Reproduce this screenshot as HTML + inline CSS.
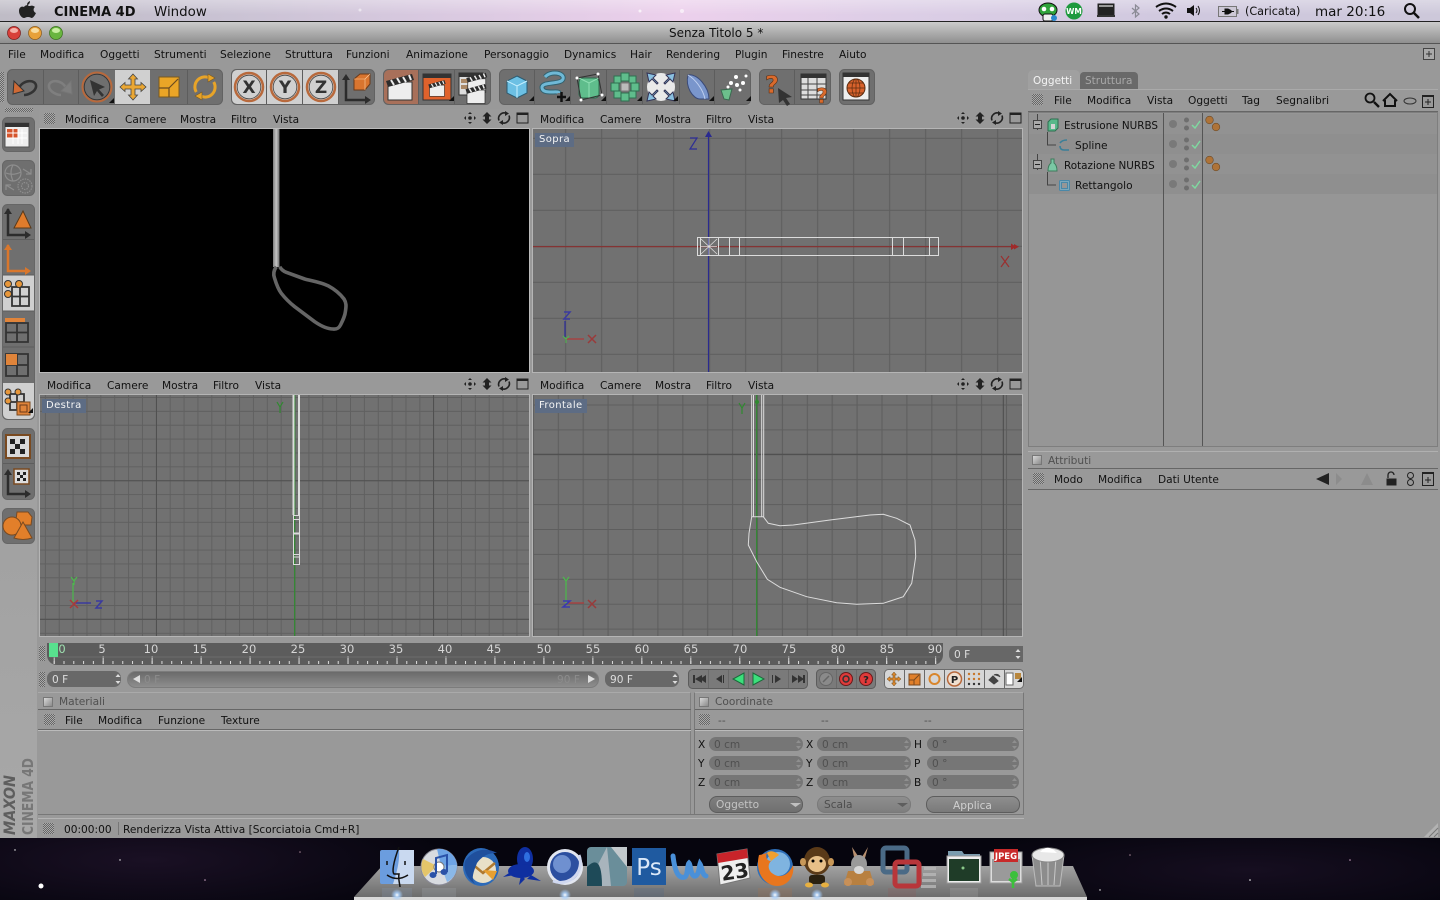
<!DOCTYPE html>
<html><head><meta charset="utf-8"><title>CINEMA 4D</title>
<style>
html,body{margin:0;padding:0;width:1440px;height:900px;overflow:hidden;background:#05040c}
div{position:absolute;box-sizing:border-box}
.t{position:absolute;margin-top:1px;white-space:nowrap;font:10.6px/14px "DejaVu Sans","Liberation Sans",sans-serif;color:#111}
.grip{width:11px;height:11px;background:repeating-conic-gradient(#666 0 25%,#aaa 0 50%) 0 0/2px 2px}
.f{background:#767676;border-radius:7px}
.g{color:#505050}
.chk{width:10px;height:10px;background:linear-gradient(135deg,#d8d8d8,#8a8a8a);border:1px solid #777}
svg{position:absolute;left:0;top:0}
text{font-family:"DejaVu Sans","Liberation Sans",sans-serif}
</style></head><body>

<div style="left:0;top:838px;width:1440px;height:62px;background:radial-gradient(ellipse 300px 60px at 150px 22px,#1a1024,rgba(6,5,14,0) 100%),radial-gradient(ellipse 300px 50px at 1250px 32px,#160e20,rgba(6,5,14,0) 100%),#06050e"></div>

<div style="left:0;top:0;width:1440px;height:22px;background:linear-gradient(180deg,rgba(255,255,255,.3),rgba(255,255,255,0) 70%),linear-gradient(90deg,#bfbcc6 0,#c8c2d2 200px,#d6c8de 400px,#ecd0ec 680px,#dccee6 900px,#cfc8de 1200px,#cdc8da 1440px);border-bottom:1px solid #222"></div>
<div style="left:0;top:22px;width:1440px;height:22px;background:linear-gradient(180deg,#cbcbcb,#8f8f8f);border-bottom:1px solid #555"></div>
<div style="left:0;top:44px;width:1440px;height:794px;background:#999"></div>
<div style="left:0;top:106px;width:37px;height:732px;background:linear-gradient(180deg,#999,#a8a8a8)"></div>

<!-- viewports -->
<div style="left:39px;top:109px;width:491px;height:20px;background:#9a9a9a"></div>
<div style="left:39px;top:128px;width:491px;height:245px;background:#000;border:1px solid #bbb"></div>
<div style="left:532px;top:128px;width:491px;height:245px;background:#717171;border:1px solid #b5b5b5"></div>
<div style="left:39px;top:394px;width:491px;height:243px;background:#717171;border:1px solid #b5b5b5"></div>
<div style="left:532px;top:394px;width:491px;height:243px;background:#717171;border:1px solid #b5b5b5"></div>

<!-- timeline -->
<div style="left:47px;top:643px;width:896px;height:22px;background:#5c5c5c;border-radius:0 0 10px 10px"></div>
<div class="f" style="left:949px;top:646px;width:74px;height:16px;background:#676767;border-radius:7px 0 0 7px"></div>
<div class="f" style="left:47px;top:671px;width:74px;height:16px;background:#686868"></div>
<div style="left:127px;top:671px;width:472px;height:17px;border-radius:9px;background:linear-gradient(180deg,#6a6a6a,#8e8e8e);border:1px solid #7c7c7c"></div>
<div class="f" style="left:605px;top:671px;width:74px;height:16px;background:#686868"></div>

<!-- materials / coordinates -->
<div style="left:38px;top:692px;width:653px;height:123px;background:#999;border:1px solid #808080;border-top-color:#aaa;border-left:0"></div>
<div style="left:38px;top:709px;width:653px;height:1px;background:#666"></div>
<div style="left:38px;top:729px;width:653px;height:2px;background:#666;border-bottom:1px solid #bbb"></div>
<div style="left:694px;top:692px;width:330px;height:123px;background:#999;border:1px solid #777;border-top-color:#aaa"></div>
<div style="left:695px;top:709px;width:328px;height:1px;background:#666"></div>
<div style="left:695px;top:729px;width:328px;height:2px;background:#666;border-bottom:1px solid #bbb"></div>
<div class="chk" style="left:43px;top:697px"></div><div class="chk" style="left:699px;top:697px"></div>

<div class="f" style="left:709px;top:737px;width:94px;height:14px"></div>
<div class="f" style="left:817px;top:737px;width:94px;height:14px"></div>
<div class="f" style="left:927px;top:737px;width:92px;height:14px"></div>
<div class="f" style="left:709px;top:756px;width:94px;height:14px"></div>
<div class="f" style="left:817px;top:756px;width:94px;height:14px"></div>
<div class="f" style="left:927px;top:756px;width:92px;height:14px"></div>
<div class="f" style="left:709px;top:775px;width:94px;height:14px"></div>
<div class="f" style="left:817px;top:775px;width:94px;height:14px"></div>
<div class="f" style="left:927px;top:775px;width:92px;height:14px"></div>
<div style="left:709px;top:796px;width:94px;height:17px;border-radius:8px;background:linear-gradient(#7e7e7e,#707070);border:1px solid #5d5d5d"></div>
<div style="left:817px;top:796px;width:94px;height:17px;border-radius:8px;background:linear-gradient(#8e8e8e,#7e7e7e);border:1px solid #7a7a7a"></div>
<div style="left:926px;top:796px;width:94px;height:17px;border-radius:8px;background:linear-gradient(#8e8e8e,#7a7a7a);border:1px solid #5d5d5d"></div>

<!-- status -->
<div style="left:38px;top:814px;width:986px;height:1px;background:#777"></div>
<div style="left:38px;top:818px;width:986px;height:1px;background:#b4b4b4"></div>
<div style="left:118px;top:822px;width:1px;height:13px;background:#777"></div>

<!-- right panels -->
<div style="left:1028px;top:70px;width:52px;height:20px;background:#a0a0a0;border-radius:5px 5px 0 0"></div>
<div style="left:1080px;top:72px;width:58px;height:18px;background:#696969;border-radius:4px 4px 0 0"></div>
<div style="left:1028px;top:89px;width:410px;height:23px;background:#999;border-top:1px solid #aaa;border-bottom:1px solid #666"></div>
<div style="left:1028px;top:112px;width:410px;height:335px;background:#969696;border:1px solid #7e7e7e"></div>
<div style="left:1029px;top:114px;width:408px;height:20px;background:#929292"></div>
<div style="left:1029px;top:134px;width:408px;height:20px;background:#8f8f8f"></div>
<div style="left:1029px;top:154px;width:408px;height:20px;background:#929292"></div>
<div style="left:1029px;top:174px;width:408px;height:20px;background:#8f8f8f"></div>
<div style="left:1163px;top:113px;width:1px;height:333px;background:#555"></div>
<div style="left:1202px;top:113px;width:1px;height:333px;background:#555"></div>
<div style="left:1028px;top:451px;width:410px;height:18px;background:#999;border-top:1px solid #b0b0b0;border-bottom:1px solid #666"></div>
<div style="left:1028px;top:469px;width:410px;height:21px;background:#999;border-bottom:1px solid #666"></div>
<div class="chk" style="left:1032px;top:455px"></div>

<!-- grips -->
<div class="grip" style="left:44px;top:113px"></div>
<div class="grip" style="left:1032px;top:94px"></div>
<div class="grip" style="left:1033px;top:473px"></div>
<div class="grip" style="left:44px;top:714px"></div>
<div class="grip" style="left:699px;top:714px"></div>
<div class="grip" style="left:43px;top:823px"></div>
<div class="grip" style="left:39px;top:646px;width:6px;height:15px"></div>
<div class="grip" style="left:39px;top:672px;width:6px;height:15px"></div>
<div class="grip" style="left:0;top:72px;width:4px;height:30px"></div>
<div class="grip" style="left:5px;top:108px;width:28px;height:4px"></div>

<svg width="1440" height="900" viewBox="0 0 1440 900">
<defs>
<pattern id="gTR" patternUnits="userSpaceOnUse" x="528.7" y="137.3" width="36" height="36"><path d="M1 0V36M0 1H36" stroke="#5e5e5e" stroke-width="1.100" fill="none"/></pattern>
<pattern id="gBR" patternUnits="userSpaceOnUse" x="532.4" y="404" width="24.9" height="24.9"><path d="M1 0V24.9M0 1H24.9" stroke="#5e5e5e" stroke-width="1.100" fill="none"/></pattern>
<pattern id="gBL" patternUnits="userSpaceOnUse" x="30.5" y="396.5" width="13.87" height="13.87"><path d="M1 0V13.87M0 1H13.87" stroke="#606060" stroke-width="1" fill="none"/></pattern>
<pattern id="tS" patternUnits="userSpaceOnUse" x="53.7" y="0" width="9.794" height="900"><path d="M.5 661V664" stroke="#ddd" stroke-width="1"/></pattern>
<pattern id="tL" patternUnits="userSpaceOnUse" x="53.7" y="0" width="48.97" height="900"><path d="M.5 656V664" stroke="#ddd" stroke-width="1"/></pattern>
<linearGradient id="shaft" x1="0" x2="1" y1="0" y2="0"><stop offset="0" stop-color="#7e7e7e"/><stop offset=".5" stop-color="#c4c4c4"/><stop offset="1" stop-color="#707070"/></linearGradient>
<linearGradient id="dock" x1="0" x2="0" y1="0" y2="1"><stop offset="0" stop-color="#a2a2a2"/><stop offset="1" stop-color="#6c6c6c"/></linearGradient>
<radialGradient id="glow"><stop offset="0" stop-color="#fff"/><stop offset=".4" stop-color="#a8d0ff" stop-opacity=".8"/><stop offset="1" stop-color="#a8d0ff" stop-opacity="0"/></radialGradient>
<g id="clap"><rect x="-12" y="-6" width="24" height="18" fill="#eee" stroke="#333"/><path d="M-14-7L12-14L14-8L-12-1Z" fill="#2c2c2c"/><path d="M-9-8L-6-3M-3-10L0-5M3-11L6-6M9-13L11-8" stroke="#eee" stroke-width="2"/></g>
<g id="tri"><path d="M0 0H5V-5Z" fill="#111"/></g>
</defs>

<!-- menubar icons -->
<path d="M28 5C25 5 24 7 24 7C22 6 19 7 19 11C19 15 22 18 24 18C25 18 26 17 28 17C30 17 31 18 32 18C34 17 35 15 36 13C33 12 33 8 35 7C34 6 32 5 30 6C29 6 28 6 28 5M27 5C27 3 28 2 30 1C30 3 29 5 27 5" fill="#222"/>
<g transform="translate(1048,12)"><ellipse rx="9" ry="7" cy="-2" fill="#2fa33a" stroke="#111"/><circle cx="-4" cy="-3" r="2.3" fill="#fff"/><circle cx="4" cy="-3" r="2.3" fill="#fff"/><rect x="-5" y="2" width="10" height="7" rx="2" fill="#eee" stroke="#111"/><circle cx="6" cy="6" r="3" fill="#2a88cc"/></g>
<circle cx="1074" cy="11" r="8.500" fill="#1e9a3e"/><text x="1074" y="14" font-size="7.500" font-weight="bold" fill="#fff" text-anchor="middle">WM</text>
<rect x="1098" y="4" width="16" height="11" fill="#222" stroke="#222"/><rect x="1099" y="5" width="14" height="2" fill="#999"/><path d="M1097 16H1115" stroke="#333" stroke-width="2"/>
<path d="M1132 8L1139 14L1135.500 17V5L1139 8L1132 14" fill="none" stroke="#8a8a94" stroke-width="1.200"/>
<g fill="none" stroke="#111" stroke-width="2"><path d="M1156 7Q1166 0 1176 7"/><path d="M1159 11Q1166 6 1173 11"/><path d="M1162 14Q1166 11 1170 14"/></g><circle cx="1166" cy="17" r="1.700" fill="#111"/>
<path d="M1187 8H1190L1194 5V16L1190 13H1187Z" fill="#111"/><path d="M1196 8Q1198 10.500 1196 13M1198 6Q1201 10.500 1198 15" fill="none" stroke="#111"/>
<rect x="1218.500" y="6.500" width="18" height="10" fill="#cdc8d6" stroke="#777"/><path d="M1237.500 9V14" stroke="#777" stroke-width="2"/><path d="M1222 11.500H1225M1225 9V14H1228L1231 12.500V10.500L1228 9ZM1231 11.500H1234" fill="#111" stroke="#111"/>
<circle cx="1410" cy="9" r="5" fill="none" stroke="#111" stroke-width="2"/><path d="M1414 13L1419 18" stroke="#111" stroke-width="2.500"/>

<!-- traffic lights -->
<circle cx="14" cy="33" r="6.500" fill="#d8403a" stroke="#7a1c1c" stroke-width=".7"/><ellipse cx="14" cy="30.500" rx="4" ry="2.500" fill="#f4b0a8"/>
<circle cx="35" cy="33" r="6.500" fill="#e8a13a" stroke="#8a5a1a" stroke-width=".7"/><ellipse cx="35" cy="30.500" rx="4" ry="2.500" fill="#f8dca0"/>
<circle cx="56" cy="33" r="6.500" fill="#69b53f" stroke="#39701c" stroke-width=".7"/><ellipse cx="56" cy="30.500" rx="4" ry="2.500" fill="#c8eea0"/>

<rect x="1423.500" y="48.500" width="11" height="11" fill="#aaa" stroke="#444"/><path d="M1426 54H1432M1429 51V57" stroke="#333"/>

<!-- top toolbar groups -->
<g stroke="#626262" fill="#6f6f6f">
<rect x="7.500" y="69.500" width="215" height="35" rx="5"/>
<rect x="231.500" y="69.500" width="143" height="35" rx="5"/>
<rect x="383.500" y="69.500" width="107" height="35" rx="5"/>
<rect x="499.500" y="69.500" width="251" height="35" rx="5"/>
<rect x="759.500" y="69.500" width="71" height="35" rx="5"/>
<rect x="839.500" y="69.500" width="35" height="35" rx="5"/>
</g>
<rect x="115" y="70" width="35" height="34" fill="#d0d0d0"/>
<path d="M232 75a5 5 0 0 1 5-5H338V104H237a5 5 0 0 1-5-5Z" fill="#d0d0d0"/>
<path d="M384 75a5 5 0 0 1 5-5H418V104H389a5 5 0 0 1-5-5Z" fill="#a8705a"/>
<g stroke="#5d5d5d"><path d="M43.500 70V104M78.500 70V104M187.500 70V104M266.500 70V104M302.500 70V104M338.500 70V104M418.500 70V104M454.500 70V104M534.500 70V104M570.500 70V104M606.500 70V104M642.500 70V104M679.500 70V104M714.500 70V104M794.500 70V104"/></g>

<!-- undo -->
<g transform="translate(25,87)"><path d="M-6 1C-2-8 12-8 11 0C10 5 3 8-1 8" fill="none" stroke="#333" stroke-width="2.600"/><path d="M-11-6L-12 7L-1 4Z" fill="#cf6a35" stroke="#333"/></g>
<g transform="translate(60,87)" opacity=".6"><path d="M6 1C2-8-12-8-11 0C-10 5-3 8 1 8" fill="none" stroke="#8a8a8a" stroke-width="2.600"/><path d="M11-6L12 7L1 4Z" fill="#888" stroke="#7c7c7c"/></g>
<g transform="translate(97,87)"><circle r="14.500" fill="none" stroke="#b8693c" stroke-width="2"/><circle r="12.800" fill="none" stroke="#333" stroke-width=".9"/><path d="M-7-7L8 0L2 2.500L7 8L5 10L0 4L-3 9Z" fill="#333"/></g>
<use href="#tri" x="109" y="103"/>
<g transform="translate(133,87)"><path d="M0-13L4.500-8H2V-2H8V-4.500L13 0L8 4.500V2H2V8H4.500L0 13L-4.500 8H-2V2H-8V4.500L-13 0L-8-4.500V-2H-2V-8H-4.500Z" fill="#eba733" stroke="#444" stroke-width=".8"/></g>
<g transform="translate(169,87)"><rect x="-10" y="-10" width="20" height="20" fill="#eaa527" stroke="#7a5a20"/><path d="M-10 1H0V10M0 1L9-8" fill="none" stroke="#6a4a20" stroke-width="1.200"/></g>
<g transform="translate(205,87)"><g fill="none" stroke="#e8a428" stroke-width="3"><path d="M5-8.700A10 10 0 0 0-8.700 5"/><path d="M-5 8.700A10 10 0 0 0 8.700-5"/></g><path d="M3-13L10-9L3-5ZM-3 13L-10 9L-3 5Z" fill="#e8a428" stroke="#7a5a20" stroke-width=".6"/></g>
<g font-size="17" font-weight="bold" fill="#333" text-anchor="middle">
<g fill="none"><circle cx="249" cy="87" r="14" stroke="#b8693c" stroke-width="2.500"/><circle cx="285" cy="87" r="14" stroke="#b8693c" stroke-width="2.500"/><circle cx="321" cy="87" r="14" stroke="#b8693c" stroke-width="2.500"/><circle cx="249" cy="87" r="11.800" stroke="#444" stroke-width=".8"/><circle cx="285" cy="87" r="11.800" stroke="#444" stroke-width=".8"/><circle cx="321" cy="87" r="11.800" stroke="#444" stroke-width=".8"/></g>
<text x="249" y="93">X</text><text x="285" y="93">Y</text><text x="321" y="93">Z</text></g>
<g transform="translate(357,87)"><path d="M-11-11V13H10" fill="none" stroke="#2c2c2c" stroke-width="2.500"/><path d="M-15-7L-11-13L-7-7ZM8 9L14 13L8 17Z" fill="#2c2c2c"/><path d="M-3-8L3-13H13V-3L8 3H-3Z" fill="#d9752f" stroke="#6a3a1a"/><path d="M-3-8H8V3M8-8L13-13" stroke="#ffd0a0" fill="none" stroke-width=".6"/></g>
<use href="#clap" x="400" y="88"/>
<g transform="translate(437,87)"><rect x="-14" y="-13" width="28" height="26" fill="#e0622c" stroke="#333"/><rect x="-14" y="-13" width="28" height="4" fill="#333"/><use href="#clap" transform="scale(.62)" y="3"/></g><use href="#tri" x="449" y="101"/>
<g transform="translate(473,87)"><rect x="-14" y="-14" width="24" height="22" fill="#ddd" stroke="#333"/><rect x="-14" y="-14" width="24" height="4" fill="#333"/><rect x="-12" y="-8" width="7" height="4" fill="#a86"/><rect x="-12" y="-2" width="7" height="4" fill="#a86"/><use href="#clap" transform="scale(.75)" x="5" y="-5"/><use href="#clap" transform="scale(.75)" x="4" y="10"/></g>
<g transform="translate(517,87)"><path d="M0-11L10-6V6L0 11L-10 6V-6Z" fill="#6cc0e4" stroke="#2a5a70"/><path d="M-10-6L0-1L10-6M0-1V11" fill="none" stroke="#c8f0ff"/></g><use href="#tri" x="529" y="101"/>
<g transform="translate(553,85)" fill="none"><path d="M-8-8C-2-15 12-12 10-6C8 0-12-4-11 3C-10 10 6 5 6 8" stroke="#33626f" stroke-width="5"/><path d="M-8-8C-2-15 12-12 10-6C8 0-12-4-11 3C-10 10 6 5 6 8" stroke="#6fb9d6" stroke-width="3"/><path d="M4 12H13M8.500 7V17" stroke="#111" stroke-width="2.500"/></g><use href="#tri" x="565" y="101"/>
<g transform="translate(589,87)"><rect x="-10" y="-9" width="20" height="20" rx="4" fill="#5fbd8c" stroke="#2c6a4c"/><path d="M-10-9L0-4L10-9M0-4V11" stroke="#8fe0b4" fill="none"/><path d="M-12-9L9-13L13 8L-8 13Z" fill="none" stroke="#333"/><g fill="#fff"><circle cx="-12" cy="-9" r="1.500"/><circle cx="9" cy="-13" r="1.500"/><circle cx="13" cy="8" r="1.500"/><circle cx="-8" cy="13" r="1.500"/></g></g><use href="#tri" x="601" y="101"/>
<g transform="translate(625,87)" fill="#5fbd8c" stroke="#2f6f50"><rect x="-4" y="-14" width="8" height="8"/><rect x="-4" y="6" width="8" height="8"/><rect x="-14" y="-4" width="8" height="8"/><rect x="6" y="-4" width="8" height="8"/><rect x="-11" y="-11" width="7" height="7"/><rect x="4" y="-11" width="7" height="7"/><rect x="-11" y="4" width="7" height="7"/><rect x="4" y="4" width="7" height="7"/><rect x="-4" y="-4" width="8" height="8" fill="#bbb" stroke="#777"/></g><use href="#tri" x="637" y="101"/>
<g transform="translate(661,87)"><circle r="14" fill="#fff" opacity=".85"/><g fill="#8ac0e0" stroke="#335"><path d="M-14-14L-5-12L-8-9L-3-4L-4-3L-9-8L-12-5Z"/><path d="M14-14L5-12L8-9L3-4L4-3L9-8L12-5Z"/><path d="M-14 14L-5 12L-8 9L-3 4L-4 3L-9 8L-12 5Z"/><path d="M14 14L5 12L8 9L3 4L4 3L9 8L12 5Z"/></g></g><use href="#tri" x="673" y="101"/>
<g transform="translate(697,87)"><path d="M-9-12C0-14 12 0 12 12L3 12C-4 12-12 0-9-12Z" fill="#7a96cc" stroke="#3a4a78"/><path d="M-9-12C-2-8 6 2 8 12" stroke="#c0d0f0" fill="none"/></g><use href="#tri" x="709" y="101"/>
<g transform="translate(734,87)"><path d="M-13 3L-2 2L-5 13L-10 12Z" fill="#6cc08c" stroke="#3a6a50"/><g fill="#fff"><circle cx="2" cy="-10" r="2"/><circle cx="9" cy="-4" r="2"/><circle cx="-3" cy="-4" r="2"/><circle cx="3" cy="-2" r="2"/><circle cx="12" cy="-11" r="1.500"/><circle cx="-6" cy="0" r="1.500"/><circle cx="6" cy="3" r="1.500"/></g></g><use href="#tri" x="746" y="101"/>
<text x="772" y="93" font-size="24" font-weight="bold" fill="#d96a2c" stroke="#5a2c10" stroke-width=".6" text-anchor="middle">?</text>
<path d="M778 88L792 97L786 98L790 104L787 106L783 100L779 103Z" fill="#333"/>
<g transform="translate(814,87)"><rect x="-13" y="-13" width="25" height="25" fill="#ddd" stroke="#333"/><rect x="-13" y="-13" width="25" height="4" fill="#333"/><path d="M-13-3H12M-13 3H12M-13 8H12M-6-9V12M3-9V12" stroke="#444"/></g>
<text x="822" y="103" font-size="20" font-weight="bold" fill="#d96a2c" stroke="#5a2c10" stroke-width=".5" text-anchor="middle">?</text>
<g transform="translate(856,87)"><rect x="-13" y="-14" width="26" height="27" fill="#eee" stroke="#333"/><rect x="-13" y="-14" width="26" height="4" fill="#333"/><circle cy="1" r="9" fill="#d9622c" stroke="#5a2c10"/><path d="M-9 1H9M0-8V10M-7-4H7M-7 6H7" stroke="#5a2c10" stroke-width=".7"/><ellipse cy="1" rx="4" ry="9" fill="none" stroke="#5a2c10" stroke-width=".7"/></g>

<!-- left toolbar -->
<g stroke="#666" fill="#6f6f6f">
<rect x="2.500" y="117.500" width="32" height="34" rx="5"/>
<rect x="2.500" y="160.500" width="32" height="35" rx="5"/>
<rect x="2.500" y="204.500" width="32" height="215" rx="5"/>
<rect x="2.500" y="428.500" width="32" height="71" rx="5"/>
<rect x="2.500" y="508.500" width="32" height="35" rx="5"/>
</g>
<rect x="3" y="275" width="31" height="36" fill="#d0d0d0"/>
<path d="M3 383H34V414a5 5 0 0 1-5 5H8a5 5 0 0 1-5-5Z" fill="#d0d0d0"/>
<path d="M3 239.500H34M3 275H34M3 347H34M3 463.500H34M3 311H34" stroke="#5d5d5d"/>
<g transform="translate(17,135)"><rect x="-12" y="-12" width="24" height="24" fill="#eee" stroke="#555"/><rect x="-12" y="-12" width="24" height="4" fill="#333"/><rect x="-10" y="-6" width="11" height="9" fill="#d5552c"/><path d="M-4-6V9M1-6V9M-10-2H10M-10 3H10M5-6V9" stroke="#fff"/></g>
<g transform="translate(18,178)" fill="none" stroke="#8e8e8e" stroke-width="1.200"><circle cx="-5" cy="-5" r="8"/><path d="M-12-5Q-5-2 3-6M-5-13Q-9-6-5 3"/><circle cx="7" cy="8" r="7" stroke-dasharray="1.500 1"/><circle cx="7" cy="8" r="3.500" stroke-dasharray="1.500 1"/><path d="M5-9L13-4M-12 7L-4 12M13-9V-4H8M-12 12V7H-7"/></g>
<g transform="translate(17,222)"><path d="M-9-13V13H9" fill="none" stroke="#2c2c2c" stroke-width="2.500"/><path d="M-13-8L-9-14L-5-8ZM8 9L14 13L8 17Z" fill="#2c2c2c"/><path d="M6-11L14 6H-3Z" fill="#e07c2c" stroke="#5a3a1a"/></g>
<g transform="translate(17,258)"><path d="M-9-13V13H9" fill="none" stroke="#d9772c" stroke-width="2.500"/><path d="M-13-8L-9-14L-5-8ZM8 9L14 13L8 17Z" fill="#d9772c"/></g>
<g transform="translate(17,293)"><path d="M-5-6H12V13H-5ZM-5 3.500H12M3-6V13M-12 0H-5" fill="none" stroke="#333" stroke-width="1.800"/><g fill="#e8973a" stroke="#333"><circle cx="-9" cy="-9" r="3.500"/><circle cx="2" cy="-9" r="3.500"/><circle cx="-9" cy="1" r="3.500"/></g></g>
<g transform="translate(17,329)"><path d="M-11-6H11V13H-11ZM-11 3.500H11M0-6V13" fill="none" stroke="#333" stroke-width="1.800"/><rect x="-12" y="-11" width="20" height="4" fill="#e0843a"/></g>
<g transform="translate(17,365)"><path d="M-11-11H11V11H-11ZM-11 0H11M0-11V11" fill="none" stroke="#333" stroke-width="1.800"/><rect x="-11" y="-11" width="11" height="11" fill="#e0843a"/></g>
<g transform="translate(17,401)"><path d="M-7-7H7V9H-7ZM-7 1H7M0-7V9" fill="none" stroke="#333" stroke-width="1.800"/><g fill="#e8973a" stroke="#333"><circle cx="-9" cy="-9" r="3"/><circle cx="1" cy="-9" r="3"/><circle cx="-9" cy="0" r="3"/></g><rect x="0" y="1" width="13" height="13" fill="#e0843a" stroke="#7a4a20"/><rect x="3" y="4" width="7" height="7" fill="none" stroke="#6a3a1a"/></g>
<use href="#tri" x="28" y="413"/>
<g transform="translate(18,446)"><rect x="-12" y="-11" width="24" height="23" fill="#d9d9d9" stroke="#7a4a20" stroke-width="2"/><path d="M-8-7h5v5h-5zM2-7h5v5h-5zM-3-2h5v5h-5zM-8 3h5v5h-5zM2 3h5v5h-5z" fill="#222"/></g>
<g transform="translate(17,481)"><path d="M-9-10V13H10" fill="none" stroke="#2c2c2c" stroke-width="2.500"/><path d="M-13-6L-9-12L-5-6ZM8 9L14 13L8 17Z" fill="#2c2c2c"/><rect x="-3" y="-12" width="15" height="15" fill="#ddd" stroke="#7a4a20" stroke-width="1.500"/><path d="M0-9h3v3h-3zM6-9h3v3h-3zM3-6h3v3h-3zM0-3h3v3h-3zM6-3h3v3h-3z" fill="#222"/></g>
<g transform="translate(18,526)" fill="#e27f2a" stroke="#7a4a20"><path d="M-1-14L10-14L14-9L13-1L2-1L-2-6Z"/><circle cx="-6" cy="0" r="9"/><path d="M5-4L14 12Q5 15-4 12Z"/></g>

<!-- viewport header icons -->
<g id="vh" fill="#222">
<g transform="translate(470,118)"><path d="M0-6L2-4H-2ZM0 6L2 4H-2ZM-6 0L-4-2V2ZM6 0L4-2V2Z"/><circle r="1.800"/></g>
<path d="M487 112L491.500 116.500H489V119.500H491.500L487 124L482.500 119.500H485V116.500H482.500Z"/>
<g transform="translate(504,118)"><g fill="none" stroke="#222" stroke-width="1.600"><path d="M2.500-4.500A5.500 5.500 0 0 0-5 2.500"/><path d="M-2.500 4.500A5.500 5.500 0 0 0 5-2.500"/></g><path d="M1-7L5-4.500L1-2ZM-1 7L-5 4.500L-1 2Z"/></g>
<rect x="517" y="113" width="11" height="10" fill="none" stroke="#222"/><rect x="517" y="113" width="11" height="2"/>
</g>
<use href="#vh" x="493"/><use href="#vh" y="266"/><use href="#vh" x="493" y="266"/>

<!-- TL render -->
<rect x="273" y="129" width="6.500" height="138" fill="url(#shaft)"/>
<path d="M276.300 266.700C274 270 273 274 274.500 278C276 283 278 289 281.300 293.300C285 298 290 303 294.700 306.700L314.700 321.700C321 326 328 329 333 329C337 329.500 339 328 340.500 325C343 320 345 316 345.500 311C346.200 306 346.500 303 344 299C341 295 336 290 328 285.700C320 282 312 281 304.700 279L286.300 272.300C283 271 281 269 279.700 266.700" fill="none" stroke="#656565" stroke-width="3.600" stroke-linejoin="round"/>

<!-- TR -->
<rect x="533" y="129" width="489" height="243" fill="url(#gTR)"/>
<path d="M533 246.700H1013" stroke="#8a2f2f" stroke-width="1.200"/><path d="M1011 243.500L1016 246.700L1011 250ZM1014 244L1019 246.700L1014 249.500Z" fill="#a02a2a"/>
<path d="M708.500 137V372" stroke="#2a2a90" stroke-width="1.200"/><path d="M705 137L708.500 131L712 137Z" fill="#2a2a90"/>
<g fill="none" stroke="#dcdcdc" stroke-width="1"><rect x="697.500" y="237.500" width="241" height="18"/><path d="M700.500 237V255M718.500 237V255M729.500 237V255M739.500 237V255M892.500 237V255M903.500 237V255M929.500 237V255"/><path d="M701 239L717 254M717 239L701 254M709 238V255M701 246.500H717" stroke-width=".8"/></g>
<path d="M690 138H697L690 149H697" stroke="#2e2e96" fill="none" stroke-width="1.200"/>
<path d="M1001 256L1009 267M1009 256L1001 267" stroke="#9a3030" stroke-width="1.200"/>
<path d="M565 321V337" stroke="#2a2a9a" stroke-width="1.200"/><path d="M566 339H584" stroke="#b03a3a" stroke-width="1.200"/><path d="M563 336L566 339L569 336M566 339V343" stroke="#4cba4c" fill="none"/>
<path d="M564 312H570L564 319H570" stroke="#3a3aa0" fill="none" stroke-width="1.500"/><path d="M588 335L596 343M596 335L588 343" stroke="#9a3a3a" stroke-width="1.500"/>

<!-- BL -->
<rect x="40" y="395" width="489" height="241" fill="url(#gBL)"/>
<path d="M156.500 395V636M433.500 395V636M40 480.700H529M40 619.300H529" stroke="#505050" stroke-width="1"/>
<path d="M294.700 395V636" stroke="#2f8a2f" stroke-width="1.200"/>
<g fill="none" stroke="#dcdcdc"><path d="M293.500 395V564.500M299.500 395V564.500" stroke-width="1"/><path d="M293.500 395V515M299 395V515" stroke-width="2"/><path d="M293 515.500H300M293 519.500H300M293 554.500H300M293 557H300M293 564.500H300"/><path d="M293 533.500H300" stroke-width="2"/></g>
<path d="M277 402L280 407V413M283 402L280 407" stroke="#2f8a2f" fill="none" stroke-width="1.200"/>
<path d="M73 583V603" stroke="#4cba4c" stroke-width="1.200"/><path d="M74 603H91" stroke="#3030a8" stroke-width="1.200"/><path d="M70 600L78 608M78 600L70 608" stroke="#a83a3a" stroke-width="1.500"/>
<path d="M71 577L74 581V585M77 577L74 581" stroke="#4cba4c" fill="none" stroke-width="1.200"/><path d="M96 601H102L96 608H102" stroke="#3a3aa0" fill="none" stroke-width="1.500"/>

<!-- BR -->
<rect x="533" y="395" width="489" height="241" fill="url(#gBR)"/>
<path d="M1003.300 395V636M533 454.300H1022" stroke="#4c4c4c" stroke-width="1"/>
<path d="M756.700 395V636" stroke="#2f8a2f" stroke-width="1.200"/>
<g fill="none" stroke="#dcdcdc" stroke-width="1"><path d="M751.700 395V516.700M753.500 395V516.700M761.700 395V516.700M763.700 395V516.700M751.700 516.700H763.700"/>
<path d="M751.700 516.700L749 533.300L748.300 545L756.700 561.700L767.300 579.300L780 587.300L806.700 596.700L836.700 602.700L856.700 604.300L883.300 603.300L903.300 596.700L911.700 583.300L915.700 556.700L915 540L910 525L896.700 518.300L883.300 514.300L870 515L830 520L793.300 525L780 525.700L768.300 523.300L763.300 516.700"/></g>
<path d="M739 403L742 408V414M745 403L742 408" stroke="#2f8a2f" fill="none" stroke-width="1.200"/><circle cx="757" cy="402" r="2" fill="#2f8a2f"/>
<path d="M566 583V603" stroke="#4cba4c" stroke-width="1.200"/><path d="M567 603H584" stroke="#b03a3a" stroke-width="1.200"/><path d="M563 601H570L563 607H570" stroke="#3a3ab0" fill="none" stroke-width="1.500"/>
<path d="M563 577L566 581V585M569 577L566 581" stroke="#4cba4c" fill="none" stroke-width="1.200"/><path d="M588 600L596 608M596 600L588 608" stroke="#9a3a3a" stroke-width="1.500"/>

<!-- timeline -->
<rect x="47" y="643" width="896" height="22" fill="url(#tS)"/><rect x="47" y="643" width="896" height="22" fill="url(#tL)"/>
<path d="M50 657H940" stroke="#6c6c6c"/>
<rect x="49" y="643" width="9" height="14" fill="#58e08e"/>
<g font-size="11.500" fill="#d6d6d6" text-anchor="middle">
<text x="62" y="653" fill="#9ee0b0">0</text><text x="102" y="653">5</text><text x="151" y="653">10</text><text x="200" y="653">15</text><text x="249" y="653">20</text><text x="298" y="653">25</text><text x="347" y="653">30</text><text x="396" y="653">35</text><text x="445" y="653">40</text><text x="494" y="653">45</text><text x="544" y="653">50</text><text x="593" y="653">55</text><text x="642" y="653">60</text><text x="691" y="653">65</text><text x="740" y="653">70</text><text x="789" y="653">75</text><text x="838" y="653">80</text><text x="887" y="653">85</text><text x="935" y="653">90</text></g>
<path d="M133 679L140 675V683ZM595 679L588 675V683Z" fill="#ddd"/>
<g fill="#ddd"><path d="M115.500 677L118 674L120.500 677ZM115.500 681L118 684L120.500 681ZM672.500 677L675 674L677.500 677ZM672.500 681L675 684L677.500 681ZM1015.500 652L1018 649L1020.500 652ZM1015.500 656L1018 659L1020.500 656Z"/></g>

<!-- transport -->
<rect x="688.500" y="669.500" width="119" height="19" rx="4" fill="#7a7a7a" stroke="#5c5c5c"/>
<rect x="816.500" y="669.500" width="59" height="19" rx="4" fill="#7a7a7a" stroke="#5c5c5c"/>
<rect x="884.500" y="669.500" width="139" height="19" rx="4" fill="#d6d6d6" stroke="#6c6c6c"/>
<path d="M708.500 670V688M728.500 670V688M748.500 670V688M768.500 670V688M788.500 670V688M836.500 670V688M856.500 670V688M904.500 670V688M924.500 670V688M944.500 670V688M964.500 670V688M984.500 670V688M1004.500 670V688" stroke="#6a6a6a"/>
<g fill="#333"><path d="M693 675h2v8h-2zM702 675V683L695 679Z"/><path d="M708 675V683L702 679Z" transform="translate(-2,0)"/><path d="M722 675V683L716 679ZM723 675h1v8h-1z"/><path d="M772 675h1v8h-1zM775 675L781 679L775 683ZM792 675L798 679L792 683ZM798 675L804 679L798 683ZM803 675h2v8h-2z"/></g>
<path d="M744 673V685L733 679Z" fill="#3ce07c" stroke="#1a6a3a"/><path d="M753 673V685L764 679Z" fill="#3ce07c" stroke="#1a6a3a"/>
<circle cx="826" cy="679" r="6.500" fill="#8a8a8a" stroke="#666"/><path d="M823 682L829 676" stroke="#666" stroke-width="1.500"/>
<circle cx="846" cy="679" r="6.500" fill="#e03a3a" stroke="#6a1a1a"/><circle cx="846" cy="679" r="3" fill="none" stroke="#333" stroke-width="1.500"/>
<circle cx="866" cy="679" r="6.500" fill="#e03a3a" stroke="#6a1a1a"/><text x="866" y="683" font-size="10" font-weight="bold" fill="#222" text-anchor="middle">?</text>
<g transform="translate(894,679)"><path d="M0-7L2.500-4H1V-1H4V-2.500L7 0L4 2.500V1H1V4H2.500L0 7L-2.500 4H-1V1H-4V2.500L-7 0L-4-2.500V-1H-1V-4H-2.500Z" fill="#d9862c" stroke="#6a4a20" stroke-width=".5"/></g>
<rect x="909" y="674" width="11" height="11" fill="#e07f2a" stroke="#7a4a20"/><path d="M909 680H914V685M914 680L919 675" stroke="#7a4a20" fill="none"/>
<circle cx="934.500" cy="679" r="5" fill="none" stroke="#d9862c" stroke-width="2"/>
<circle cx="954.500" cy="679" r="7" fill="#f0e0d0" stroke="#b8693c" stroke-width="1.500"/><text x="954.500" y="683" font-size="10" font-weight="bold" fill="#222" text-anchor="middle">P</text>
<g fill="#c8762a"><circle cx="969" cy="674" r="1.200"/><circle cx="974" cy="674" r="1.200"/><circle cx="979" cy="674" r="1.200"/><circle cx="969" cy="679" r="1.200"/><circle cx="974" cy="679" r="1.200"/><circle cx="979" cy="679" r="1.200"/></g><g fill="#333"><circle cx="969" cy="684" r="1.200"/><circle cx="974" cy="684" r="1.200"/><circle cx="979" cy="684" r="1.200"/></g>
<path d="M989 680L993 676L998 681L994 684ZM994 675Q998 673 1000 677" fill="#444" stroke="#444"/>
<path d="M1006 673H1013V685H1006Z" fill="#fff" stroke="#666"/><rect x="1015" y="673" width="6" height="6" fill="#b8863c"/><use href="#tri" x="1017" y="682"/>

<!-- field steppers -->
<g fill="#8f8f8f"><path id="st" d="M796 743L798.500 740L801 743ZM796 746L798.500 749L801 746Z"/><use href="#st" x="108"/><use href="#st" x="216"/><use href="#st" y="19"/><use href="#st" x="108" y="19"/><use href="#st" x="216" y="19"/><use href="#st" y="38"/><use href="#st" x="108" y="38"/><use href="#st" x="216" y="38"/></g>
<path d="M790 803H801L795.500 807Z" fill="#c0c0c0"/><path d="M897 803H908L902.500 807Z" fill="#5e5e5e"/>

<!-- tree -->
<g fill="none" stroke="#444"><path d="M1037.500 114V130M1037.500 154V170M1047.500 132V145H1056M1047.500 172V185H1056"/></g>
<g fill="#aaa" stroke="#444"><rect x="1033.500" y="120.500" width="8" height="8"/><rect x="1033.500" y="160.500" width="8" height="8"/></g><path d="M1035 124.500H1040M1035 164.500H1040" stroke="#222"/>
<g transform="translate(1053,125)"><path d="M-5-3L-2-6H5V3L2 6H-5Z" fill="#58b88a" stroke="#2e6e50"/><rect x="-2" y="-1" width="4" height="5" fill="#d4d4d4"/></g>
<g fill="none" stroke="#3a7f98" stroke-width="1.600"><path d="M1060 143Q1062 140 1067 140M1060 146Q1060 150 1064 150H1069"/></g>
<path d="M1051 159H1054V163Q1057 165 1057 171H1048Q1048 165 1051 163Z" fill="#7ac8a4" stroke="#3e7a5c"/>
<rect x="1059.500" y="180.500" width="10" height="10" rx="1" fill="#7ca8bc" stroke="#4a88a8"/><rect x="1061.500" y="182.500" width="6" height="6" fill="#969696" stroke="#4a88a8"/>
<g id="rw"><circle cx="1173" cy="124" r="4" fill="#797979"/><circle cx="1186.500" cy="120" r="2.500" fill="#6e6e6e"/><circle cx="1186.500" cy="128" r="2.500" fill="#6e6e6e"/><path d="M1192 125L1195 128L1200 121" fill="none" stroke="#7fd8a0" stroke-width="1.500"/></g>
<use href="#rw" y="20"/><use href="#rw" y="40"/><use href="#rw" y="60"/>
<g fill="#ae7338" stroke="#6a4a28" stroke-width=".6"><circle cx="1209.500" cy="120" r="3.800"/><circle cx="1216" cy="127" r="3.800"/><circle cx="1209.500" cy="160" r="3.800"/><circle cx="1216" cy="167" r="3.800"/></g>

<!-- OM icons -->
<g fill="none" stroke="#111" stroke-width="1.800"><circle cx="1370" cy="98" r="4.500"/><path d="M1374 102L1379 107" stroke-width="2.400"/><path d="M1383 101L1390 94L1397 101M1385 100V106H1395V100" stroke-width="2"/></g>
<ellipse cx="1410" cy="101" rx="6" ry="3" fill="none" stroke="#333"/><rect x="1422.500" y="95.500" width="11" height="12" fill="none" stroke="#222"/><rect x="1422" y="95" width="12" height="2" fill="#222"/><path d="M1425 102H1431M1428 99V105" stroke="#222"/>
<path d="M1316 479L1329 473V485Z" fill="#222"/><path d="M1342 479L1336 473V485Z" fill="#8c8c8c"/><path d="M1367 473L1361 485H1373Z" fill="#8c8c8c"/>
<rect x="1386.500" y="478.500" width="10" height="7" fill="#222"/><path d="M1388 478V475A3 3 0 0 1 1394 475" fill="none" stroke="#222" stroke-width="1.300"/>
<circle cx="1410.500" cy="475.500" r="3" fill="none" stroke="#222"/><circle cx="1410.500" cy="482.500" r="3" fill="none" stroke="#222"/>
<rect x="1422.500" y="473.500" width="11" height="12" fill="none" stroke="#222"/><rect x="1422" y="472" width="12" height="2" fill="#222"/><path d="M1425 480H1431M1428 477V483" stroke="#222"/>
<path d="M1424 837L1438 823V837Z" fill="#b2b2b2"/><path d="M1429 837L1438 828M1434 837L1438 833" stroke="#777"/>

<!-- logo -->
<text transform="translate(15,835) rotate(-90)" font-size="16" font-weight="bold" font-style="italic" fill="#5e5e5e" textLength="60" lengthAdjust="spacingAndGlyphs">MAXON</text>
<text transform="translate(33,835) rotate(-90)" font-size="15" font-weight="bold" fill="#777" textLength="77" lengthAdjust="spacingAndGlyphs">CINEMA 4D</text>

<!-- desktop stars -->
<g fill="#fff"><circle cx="41" cy="886" r="2.500"/><circle cx="120" cy="860" r=".7"/><circle cx="205" cy="880" r=".8" fill="#c8a0c0"/><circle cx="300" cy="852" r=".8" fill="#a08090"/><circle cx="1130" cy="855" r=".8" fill="#a08090"/><circle cx="1250" cy="880" r=".8"/><circle cx="1350" cy="860" r=".8" fill="#c8a0c0"/><circle cx="15" cy="850" r=".7"/><circle cx="1100" cy="890" r=".7"/><circle cx="640" cy="11" r="1.500" fill="#fff" opacity=".7"/><circle cx="682" cy="11" r="2" fill="#fff" opacity=".6"/><circle cx="360" cy="10" r="1.500" fill="#fff" opacity=".5"/></g>

<!-- dock -->
<path d="M382 866H1073L1087 897H354Z" fill="url(#dock)"/>
<rect x="354" y="897" width="733" height="3" fill="#d8d8d8"/>
<g fill="#b8b8b8" opacity=".8"><rect x="924" y="867" width="12" height="3"/><rect x="923" y="873" width="13" height="3"/><rect x="922" y="879" width="14" height="3"/><rect x="921" y="885" width="15" height="3"/></g>
<g opacity=".13"><rect x="382" y="888" width="30" height="9" fill="#8fb0e0"/><rect x="422" y="888" width="34" height="9" fill="#c8d4e0"/><rect x="634" y="888" width="30" height="9" fill="#2a5a9a"/><rect x="758" y="888" width="34" height="9" fill="#d87028"/><rect x="888" y="888" width="28" height="9" fill="#b04040"/><rect x="950" y="888" width="28" height="9" fill="#ddd"/></g>

<g transform="translate(397,867)"><rect x="-17" y="-17" width="34" height="34" rx="2" fill="#6b9ddf"/><path d="M2-17H17V17H-4C-1 8 3-5 2-17Z" fill="#c9d9f0"/><path d="M2-20C-4-4-5 5-3 7L2 7C1 12 3 18 3 20" fill="none" stroke="#111" stroke-width="1.500"/><path d="M-10-6V-2M8-6V-2M-10 8Q0 15 11 8" fill="none" stroke="#111" stroke-width="1.500"/></g>
<g transform="translate(439,867)"><circle r="18" fill="#d8dbe0" stroke="#8a8a96"/><path d="M-2-18A18 18 0 0 1 18-2L2-1Z" fill="#6ea4e4"/><path d="M-14 10A18 18 0 0 1-16-8L-2-1Z" fill="#e4c56a"/><path d="M2-1L18-2A18 18 0 0 1 8 15Z" fill="#8ab8e8"/><circle r="5" fill="#fff" stroke="#777"/><path d="M-3 7V-9L8-12V5" fill="none" stroke="#2a52a8" stroke-width="2"/><ellipse cx="-6" cy="8" rx="3.500" ry="3" fill="#2a52a8"/><ellipse cx="5" cy="5" rx="3.500" ry="3" fill="#2a52a8"/></g>
<g transform="translate(481,867)"><ellipse rx="18" ry="19" fill="#2c6ab8"/><ellipse cx="2" cy="3" rx="13" ry="13" fill="#e8e0c8"/><path d="M-10-4L2 6L14-4" fill="none" stroke="#b07a30" stroke-width="2.500"/><path d="M-16-6C-8-18 6-20 16-14C8-14 2-12-4-4C-8 6-10 12-6 17C-14 12-18 2-16-6Z" fill="#1f4f9c"/><path d="M2 3L12 13L16 4Z" fill="#e8a030"/></g>
<g transform="translate(523,867)" fill="#0f2fa0"><ellipse cx="2" cy="-8" rx="8" ry="12"/><ellipse cx="-2" cy="4" rx="13" ry="7"/><path d="M-14 6L-20 10L-8 8ZM8 8L18 14L4 12ZM-2 8L-4 18L2 12Z"/><ellipse cx="4" cy="-10" rx="3" ry="5" fill="#2f6fe0"/></g>
<g transform="translate(565,867)"><circle r="18" fill="#e2e6f0"/><circle r="15" fill="#2c4fa0"/><circle cx="-3" cy="-3" r="9" fill="#6f90d0"/><path d="M-12 14A20 20 0 0 0 14-12" fill="none" stroke="#d0d8f0" stroke-width="3"/></g>
<g transform="translate(607,867)"><rect x="-20" y="-20" width="40" height="39" rx="4" fill="#6a8e9a"/><path d="M-20 19L0-20L4 19Z" fill="#a8b4bc"/><path d="M4-20H20V0Z" fill="#c2c8cc"/><path d="M-20 0Q-5-15-5 19H-20Z" fill="#1e4a58"/></g>
<g transform="translate(649,867)"><rect x="-17" y="-19" width="34" height="37" fill="#1f5aa0"/><text x="0" y="8" font-size="23" font-weight="normal" fill="#dbe8f8" text-anchor="middle" font-family="Liberation Sans">Ps</text></g>
<g transform="translate(691,867)" fill="none" stroke="#4a90d8" stroke-width="5" stroke-linecap="round"><path d="M-18-11C-16 6-12 12-6 10C-3 8-4-2-2-4C0-2-1 7 3 9C8 10 8 0 9-3C11 0 11 8 15 9"/></g>
<g transform="translate(733,867)"><path d="M-16-13L14-18L17 11L-13 18Z" fill="#eee" stroke="#777"/><path d="M-16-13L14-18L15-9L-15-4Z" fill="#c8242a"/><text x="1" y="12" font-size="20" font-weight="bold" fill="#222" text-anchor="middle" transform="rotate(-9)">23</text></g>
<g transform="translate(775,867)"><circle r="18" fill="#2f6fb8"/><circle cx="3" cy="-3" r="12" fill="#7fb4e0"/><path d="M-16-12C-20 4-12 18 2 19C13 19 20 9 18-2C14 8 6 11 0 8C-7 5-8-2-4-6C-8-6-10-10-8-14C-12-13-14-12-16-12Z" fill="#e8761e"/><path d="M-8-14C-4-18 2-14 4-12L-4-6Z" fill="#f0a030"/></g>
<g transform="translate(817,867)"><ellipse cy="-6" rx="13" ry="14" fill="#5a3a18"/><ellipse cx="-14" cy="-5" rx="3" ry="4" fill="#c89858"/><ellipse cx="14" cy="-5" rx="3" ry="4" fill="#c89858"/><ellipse cy="-3" rx="9" ry="8" fill="#e8c088"/><circle cx="-4" cy="-6" r="1.500"/><circle cx="4" cy="-6" r="1.500"/><rect x="-8" y="8" width="16" height="9" rx="3" fill="#2a2010"/><ellipse cx="-8" cy="18" rx="4" ry="2.500" fill="#e8b040"/><ellipse cx="8" cy="18" rx="4" ry="2.500" fill="#e8b040"/></g>
<g transform="translate(859,867)"><path d="M-5-10L-7-20L-1-11ZM3-10L9-20L6-9Z" fill="#b89070"/><ellipse cy="-3" rx="8" ry="9" fill="#9a9a9a"/><path d="M-11 4H11L15 18H-15Z" fill="#b88040"/><ellipse cy="3" rx="5" ry="4" fill="#d8d8d8"/><circle cx="-11" cy="15" r="4" fill="#c89058"/><circle cx="11" cy="15" r="4" fill="#c89058"/></g>
<g transform="translate(901,867)" fill="none"><rect x="-18" y="-19" width="24" height="24" rx="3" stroke="#4a6a86" stroke-width="5"/><rect x="-6" y="-5" width="24" height="24" rx="3" stroke="#b8363a" stroke-width="5"/></g>
<g transform="translate(964,867)"><path d="M-16-16H-2L0-13H16V-9H-16Z" fill="#7a9cae"/><rect x="-17" y="-11" width="34" height="27" fill="#eee" stroke="#999"/><rect x="-15" y="-8" width="30" height="22" fill="#1f3c28"/><circle cx="-1" cy="1" r="1.500" fill="#8ac88a"/></g>
<g transform="translate(1006,867)"><rect x="-16" y="-15" width="32" height="31" fill="#ddd" stroke="#999"/><rect x="-14" y="-8" width="28" height="22" fill="#9a9a9a"/><rect x="-12" y="-18" width="24" height="13" fill="#c82a2a"/><text x="0" y="-8" font-size="8.500" font-weight="bold" fill="#fff" text-anchor="middle">JPEG</text><path d="M7 10V21M3 12L7 15L11 12" stroke="#3cc03c" stroke-width="2.500" fill="none"/><circle cx="8" cy="8" r="4" fill="#3cc03c"/></g>
<g transform="translate(1048,867)"><path d="M-16-12L-12 19H12L16-12Z" fill="#8c8c8c" stroke="#bbb"/><path d="M-8-10L-6 18M0-10V18M8-10L6 18" stroke="#c8c8c8"/><ellipse cy="-12" rx="16" ry="7" fill="#e8e8e8" stroke="#888"/><path d="M-8-15Q0-24 9-14Z" fill="#fff"/></g>
<g fill="url(#glow)"><circle cx="397" cy="895" r="6"/><circle cx="565" cy="895" r="6"/><circle cx="775" cy="895" r="6"/><circle cx="817" cy="895" r="6"/></g>
</svg>

<!-- menubar text -->
<span class="t" style="left:54px;top:4px;font:bold 13px/16px 'DejaVu Sans',sans-serif">CINEMA 4D</span>
<span class="t" style="left:154px;top:4px;font:13.400px/16px 'DejaVu Sans',sans-serif">Window</span>
<span class="t" style="left:1245px;top:3px;font-size:11.200px;line-height:16px">(Caricata)</span>
<span class="t" style="left:1315px;top:3px;font:13.500px/16px 'DejaVu Sans',sans-serif">mar 20:16</span>
<span class="t" style="left:669px;top:25px;font:12px/15px 'DejaVu Sans',sans-serif">Senza Titolo 5 *</span>

<!-- main menu -->
<span class="t" style="left:8px;top:47px">File</span><span class="t" style="left:40px;top:47px">Modifica</span><span class="t" style="left:100px;top:47px">Oggetti</span><span class="t" style="left:154px;top:47px">Strumenti</span><span class="t" style="left:220px;top:47px">Selezione</span><span class="t" style="left:285px;top:47px">Struttura</span><span class="t" style="left:346px;top:47px">Funzioni</span><span class="t" style="left:406px;top:47px">Animazione</span><span class="t" style="left:484px;top:47px">Personaggio</span><span class="t" style="left:564px;top:47px">Dynamics</span><span class="t" style="left:630px;top:47px">Hair</span><span class="t" style="left:666px;top:47px">Rendering</span><span class="t" style="left:735px;top:47px">Plugin</span><span class="t" style="left:782px;top:47px">Finestre</span><span class="t" style="left:839px;top:47px">Aiuto</span>

<!-- viewport menus -->
<span class="t" style="left:65px;top:112px">Modifica</span><span class="t" style="left:125px;top:112px">Camere</span><span class="t" style="left:180px;top:112px">Mostra</span><span class="t" style="left:231px;top:112px">Filtro</span><span class="t" style="left:273px;top:112px">Vista</span>
<span class="t" style="left:540px;top:112px">Modifica</span><span class="t" style="left:600px;top:112px">Camere</span><span class="t" style="left:655px;top:112px">Mostra</span><span class="t" style="left:706px;top:112px">Filtro</span><span class="t" style="left:748px;top:112px">Vista</span>
<span class="t" style="left:47px;top:378px">Modifica</span><span class="t" style="left:107px;top:378px">Camere</span><span class="t" style="left:162px;top:378px">Mostra</span><span class="t" style="left:213px;top:378px">Filtro</span><span class="t" style="left:255px;top:378px">Vista</span>
<span class="t" style="left:540px;top:378px">Modifica</span><span class="t" style="left:600px;top:378px">Camere</span><span class="t" style="left:655px;top:378px">Mostra</span><span class="t" style="left:706px;top:378px">Filtro</span><span class="t" style="left:748px;top:378px">Vista</span>

<!-- viewport labels -->
<span class="t" style="left:535px;top:132px;padding:0 4px;background:#5d6c84;color:#f4f4f4;letter-spacing:.4px;font-size:10px">Sopra</span>
<span class="t" style="left:42px;top:398px;padding:0 4px;background:#5d6c84;color:#f4f4f4;letter-spacing:.4px;font-size:10px">Destra</span>
<span class="t" style="left:535px;top:398px;padding:0 4px;background:#5d6c84;color:#f4f4f4;letter-spacing:.4px;font-size:10px">Frontale</span>

<!-- timeline fields -->
<span class="t" style="left:954px;top:647px;color:#ddd">0 F</span>
<span class="t" style="left:52px;top:672px;color:#ddd">0 F</span>
<span class="t" style="left:144px;top:672px;color:#8c8c8c">0 F</span>
<span class="t" style="left:557px;top:672px;color:#8c8c8c">90 F</span>
<span class="t" style="left:610px;top:672px;color:#ddd">90 F</span>

<!-- materials -->
<span class="t g" style="left:59px;top:694px">Materiali</span>
<span class="t" style="left:65px;top:713px">File</span><span class="t" style="left:98px;top:713px">Modifica</span><span class="t" style="left:158px;top:713px">Funzione</span><span class="t" style="left:221px;top:713px">Texture</span>

<!-- coordinates -->
<span class="t g" style="left:715px;top:694px">Coordinate</span>
<span class="t g" style="left:718px;top:713px">--</span><span class="t g" style="left:821px;top:713px">--</span><span class="t g" style="left:924px;top:713px">--</span>
<span class="t" style="left:698px;top:737px">X</span><span class="t" style="left:698px;top:756px">Y</span><span class="t" style="left:698px;top:775px">Z</span>
<span class="t" style="left:806px;top:737px">X</span><span class="t" style="left:806px;top:756px">Y</span><span class="t" style="left:806px;top:775px">Z</span>
<span class="t" style="left:914px;top:737px">H</span><span class="t" style="left:914px;top:756px">P</span><span class="t" style="left:914px;top:775px">B</span>
<span class="t g" style="left:714px;top:737px">0 cm</span><span class="t g" style="left:822px;top:737px">0 cm</span><span class="t g" style="left:932px;top:737px">0 °</span>
<span class="t g" style="left:714px;top:756px">0 cm</span><span class="t g" style="left:822px;top:756px">0 cm</span><span class="t g" style="left:932px;top:756px">0 °</span>
<span class="t g" style="left:714px;top:775px">0 cm</span><span class="t g" style="left:822px;top:775px">0 cm</span><span class="t g" style="left:932px;top:775px">0 °</span>
<span class="t" style="left:716px;top:797px;color:#c4c4c4">Oggetto</span>
<span class="t" style="left:824px;top:797px;color:#4e4e4e">Scala</span>
<span class="t" style="left:953px;top:798px;color:#d0d0d0">Applica</span>

<!-- status -->
<span class="t" style="left:64px;top:822px">00:00:00</span>
<span class="t" style="left:123px;top:822px">Renderizza Vista Attiva [Scorciatoia Cmd+R]</span>

<!-- object manager -->
<span class="t" style="left:1033px;top:73px;color:#f4f4f4;font-size:10.500px">Oggetti</span>
<span class="t" style="left:1085px;top:73px;color:#a8a8a8;font-size:10.500px">Struttura</span>
<span class="t" style="left:1054px;top:93px">File</span><span class="t" style="left:1087px;top:93px">Modifica</span><span class="t" style="left:1147px;top:93px">Vista</span><span class="t" style="left:1188px;top:93px">Oggetti</span><span class="t" style="left:1242px;top:93px">Tag</span><span class="t" style="left:1276px;top:93px">Segnalibri</span>
<span class="t" style="left:1064px;top:118px;font-size:10.400px">Estrusione NURBS</span><span class="t" style="left:1075px;top:138px">Spline</span><span class="t" style="left:1064px;top:158px;font-size:10.400px">Rotazione NURBS</span><span class="t" style="left:1075px;top:178px">Rettangolo</span>

<!-- attributes -->
<span class="t g" style="left:1048px;top:453px">Attributi</span>
<span class="t" style="left:1054px;top:472px">Modo</span><span class="t" style="left:1098px;top:472px">Modifica</span><span class="t" style="left:1158px;top:472px">Dati Utente</span>
</body></html>
